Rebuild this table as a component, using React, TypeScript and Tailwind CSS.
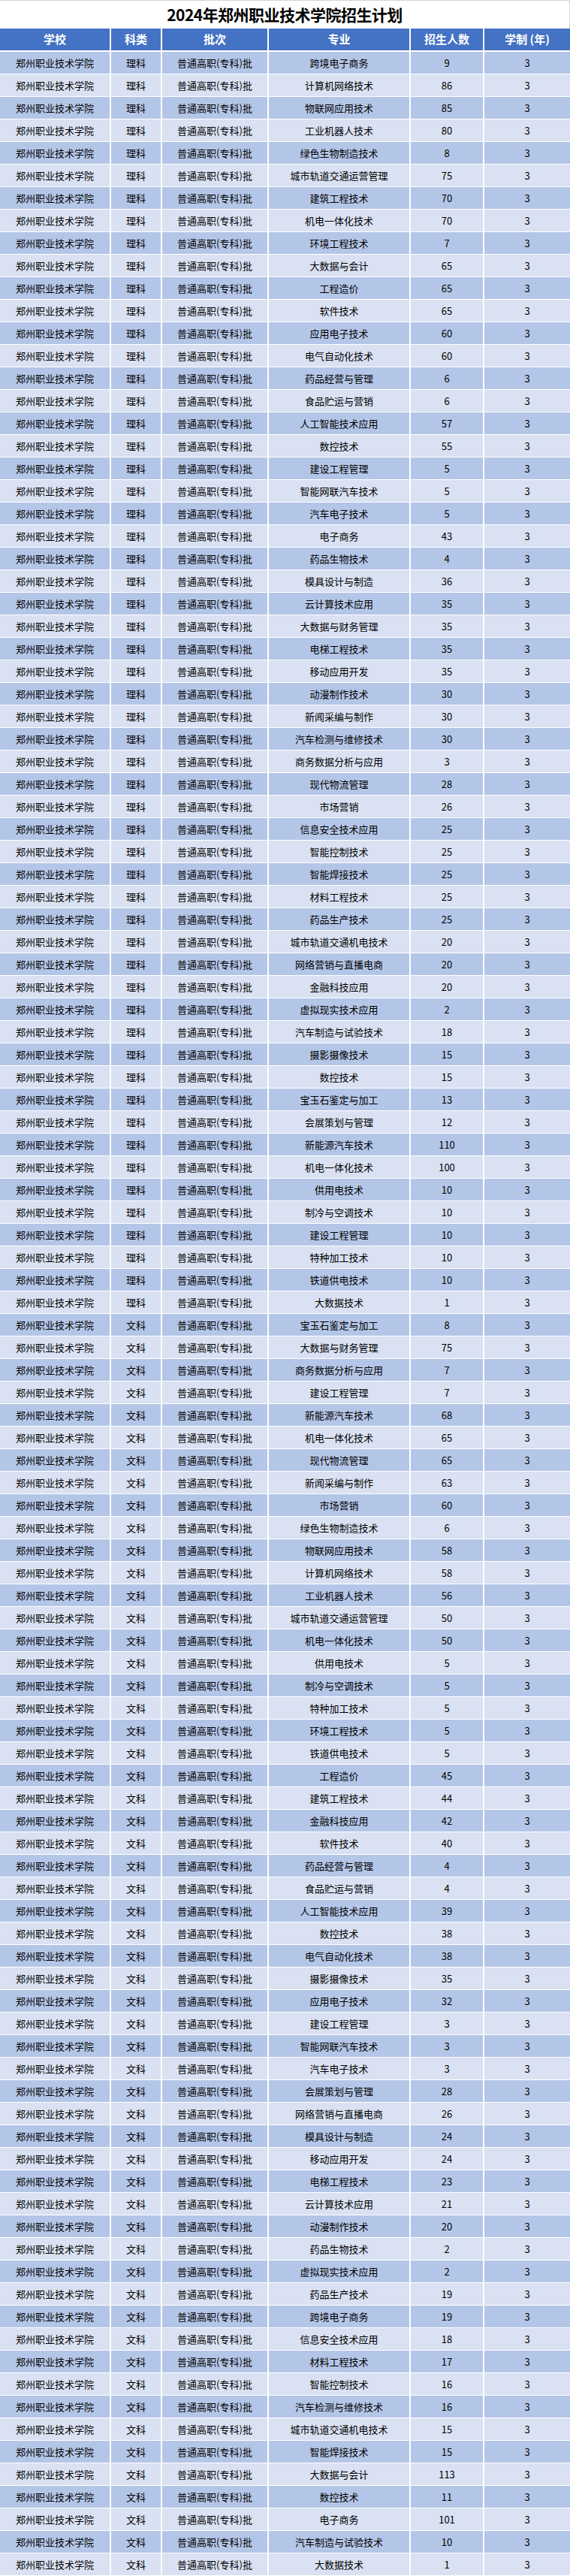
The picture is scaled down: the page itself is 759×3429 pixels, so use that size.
import React from "react";

// 专业 / 招生人数, in the order of the sheet
const science: [string, number][] = [
  ["跨境电子商务", 9],
  ["计算机网络技术", 86],
  ["物联网应用技术", 85],
  ["工业机器人技术", 80],
  ["绿色生物制造技术", 8],
  ["城市轨道交通运营管理", 75],
  ["建筑工程技术", 70],
  ["机电一体化技术", 70],
  ["环境工程技术", 7],
  ["大数据与会计", 65],
  ["工程造价", 65],
  ["软件技术", 65],
  ["应用电子技术", 60],
  ["电气自动化技术", 60],
  ["药品经营与管理", 6],
  ["食品贮运与营销", 6],
  ["人工智能技术应用", 57],
  ["数控技术", 55],
  ["建设工程管理", 5],
  ["智能网联汽车技术", 5],
  ["汽车电子技术", 5],
  ["电子商务", 43],
  ["药品生物技术", 4],
  ["模具设计与制造", 36],
  ["云计算技术应用", 35],
  ["大数据与财务管理", 35],
  ["电梯工程技术", 35],
  ["移动应用开发", 35],
  ["动漫制作技术", 30],
  ["新闻采编与制作", 30],
  ["汽车检测与维修技术", 30],
  ["商务数据分析与应用", 3],
  ["现代物流管理", 28],
  ["市场营销", 26],
  ["信息安全技术应用", 25],
  ["智能控制技术", 25],
  ["智能焊接技术", 25],
  ["材料工程技术", 25],
  ["药品生产技术", 25],
  ["城市轨道交通机电技术", 20],
  ["网络营销与直播电商", 20],
  ["金融科技应用", 20],
  ["虚拟现实技术应用", 2],
  ["汽车制造与试验技术", 18],
  ["摄影摄像技术", 15],
  ["数控技术", 15],
  ["宝玉石鉴定与加工", 13],
  ["会展策划与管理", 12],
  ["新能源汽车技术", 110],
  ["机电一体化技术", 100],
  ["供用电技术", 10],
  ["制冷与空调技术", 10],
  ["建设工程管理", 10],
  ["特种加工技术", 10],
  ["铁道供电技术", 10],
  ["大数据技术", 1],
];

const arts: [string, number][] = [
  ["宝玉石鉴定与加工", 8],
  ["大数据与财务管理", 75],
  ["商务数据分析与应用", 7],
  ["建设工程管理", 7],
  ["新能源汽车技术", 68],
  ["机电一体化技术", 65],
  ["现代物流管理", 65],
  ["新闻采编与制作", 63],
  ["市场营销", 60],
  ["绿色生物制造技术", 6],
  ["物联网应用技术", 58],
  ["计算机网络技术", 58],
  ["工业机器人技术", 56],
  ["城市轨道交通运营管理", 50],
  ["机电一体化技术", 50],
  ["供用电技术", 5],
  ["制冷与空调技术", 5],
  ["特种加工技术", 5],
  ["环境工程技术", 5],
  ["铁道供电技术", 5],
  ["工程造价", 45],
  ["建筑工程技术", 44],
  ["金融科技应用", 42],
  ["软件技术", 40],
  ["药品经营与管理", 4],
  ["食品贮运与营销", 4],
  ["人工智能技术应用", 39],
  ["数控技术", 38],
  ["电气自动化技术", 38],
  ["摄影摄像技术", 35],
  ["应用电子技术", 32],
  ["建设工程管理", 3],
  ["智能网联汽车技术", 3],
  ["汽车电子技术", 3],
  ["会展策划与管理", 28],
  ["网络营销与直播电商", 26],
  ["模具设计与制造", 24],
  ["移动应用开发", 24],
  ["电梯工程技术", 23],
  ["云计算技术应用", 21],
  ["动漫制作技术", 20],
  ["药品生物技术", 2],
  ["虚拟现实技术应用", 2],
  ["药品生产技术", 19],
  ["跨境电子商务", 19],
  ["信息安全技术应用", 18],
  ["材料工程技术", 17],
  ["智能控制技术", 16],
  ["汽车检测与维修技术", 16],
  ["城市轨道交通机电技术", 15],
  ["智能焊接技术", 15],
  ["大数据与会计", 113],
  ["数控技术", 11],
  ["电子商务", 101],
  ["汽车制造与试验技术", 10],
  ["大数据技术", 1],
];

const rows = [
  ...science.map(([major, count]) => ({ kind: "理科", major, count })),
  ...arts.map(([major, count]) => ({ kind: "文科", major, count })),
];

const headers = ["学校", "科类", "批次", "专业", "招生人数", "学制（年）"];

const font = { fontFamily: '"Noto Sans CJK SC", "Noto Sans", sans-serif' };

export default function App() {
  return (
    <div className="w-[759px] bg-white text-black" style={font}>
      <div className="h-[38px] border-t border-r border-[#d4d4d4] flex items-center justify-center">
        <h1 className="text-[21px] font-bold leading-none tracking-tight">2024年郑州职业技术学院招生计划</h1>
      </div>

      <div className="grid grid-cols-[148px_68px_142px_189px_98px_114px]">
        {headers.map((h, i) => (
          <div
            key={h}
            className={
              "h-[31px] bg-[#4472c4] border-b-2 border-white text-white font-bold text-[15px] flex items-center justify-center " +
              (i < headers.length - 1 ? "border-r-2" : "")
            }
          >
            {h === "学制（年）" ? "学制 (年)" : h}
          </div>
        ))}

        {rows.map((r, idx) => {
          const bg = idx % 2 === 0 ? "bg-[#b4c6e7]" : "bg-[#d9e1f2]";
          const cells = ["郑州职业技术学院", r.kind, "普通高职(专科)批", r.major, String(r.count), "3"];
          return cells.map((c, i) => (
            <div
              key={idx + "-" + i}
              className={
                "h-[30px] border-b border-white text-[13px] flex items-center justify-center whitespace-nowrap " +
                bg +
                (i < cells.length - 1 ? " border-r-2" : "")
              }
            >
              {c}
            </div>
          ));
        })}
      </div>
    </div>
  );
}
